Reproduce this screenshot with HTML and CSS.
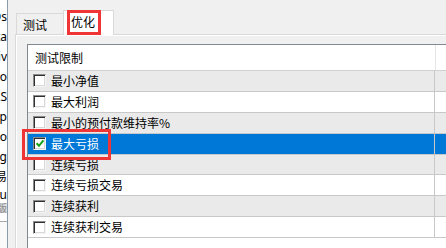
FILE: index.html
```html
<!DOCTYPE html>
<html>
<head>
<meta charset="utf-8">
<link rel="stylesheet" href="styles.css">
</head>
<body>
<div class="window">
  <div class="side">
    <div class="si">EDs</div>
    <div class="si">ta</div>
    <div class="si">riv</div>
    <div class="si">to</div>
    <div class="si">LS</div>
    <div class="si">ep</div>
    <div class="si">Auto</div>
    <div class="si">Sig</div>
    <div class="si">交易</div>
    <div class="si short">Tutu</div>
    <div class="si band">版</div>
    <div class="side-foot"></div>
  </div>
  <div class="main">
    <div class="tabs">
      <div class="tab">测试</div>
      <div class="tab active">优化</div>
    </div>
    <div class="page">
      <div class="list">
        <div class="header">
          <div class="hcol">测试限制</div>
          <div class="hrest"></div>
        </div>
        <div class="row alt"><div class="cell"><span class="cb"></span><span class="label">最小净值</span></div></div>
        <div class="row"><div class="cell"><span class="cb"></span><span class="label">最大利润</span></div></div>
        <div class="row alt"><div class="cell"><span class="cb"></span><span class="label">最小的预付款维持率%</span></div></div>
        <div class="row sel"><div class="cell"><span class="cb"><svg class="tick" viewBox="0 0 13 13" width="13" height="13"><polyline points="3.6,6.2 6,8.8 10.4,3.4" fill="none" stroke="#17a217" stroke-width="2"/></svg></span><span class="label">最大亏损</span></div></div>
        <div class="row alt"><div class="cell"><span class="cb"></span><span class="label">连续亏损</span></div></div>
        <div class="row"><div class="cell"><span class="cb"></span><span class="label">连续亏损交易</span></div></div>
        <div class="row alt"><div class="cell"><span class="cb"></span><span class="label">连续获利</span></div></div>
        <div class="row"><div class="cell"><span class="cb"></span><span class="label">连续获利交易</span></div></div>
      </div>
    </div>
  </div>
</div>
<div class="mark mark-tab"></div>
<div class="mark mark-row"></div>
</body>
</html>
```
FILE: styles.css
```css
html, body {
  margin: 0;
  padding: 0;
}
body {
  width: 446px;
  height: 248px;
  overflow: hidden;
  position: relative;
  background: #f0f0f0;
  font-family: "Noto Sans CJK SC", "Noto Sans", sans-serif;
  font-size: 12px;
  color: #000;
}
.window {
  display: flex;
  height: 248px;
}
.side {
  width: 8px;
  flex: none;
  box-sizing: border-box;
  background: #fff;
  border-right: 1px solid #8c9bab;
  overflow: hidden;
  padding-top: 7px;
  display: flex;
  flex-direction: column;
}
.si {
  height: 20px;
  line-height: 20px;
  white-space: nowrap;
  display: flex;
  justify-content: flex-end;
  font-family: "Noto Sans", "Noto Sans CJK SC", sans-serif;
  font-size: 12px;
  flex: none;
  overflow: hidden;
}
.si.short {
  height: 16px;
  line-height: 16px;
}
.si.band {
  height: 10px;
  line-height: 10px;
  background: #dedede;
  color: #8a8a8a;
  font-size: 10px;
}
.side-foot {
  margin-top: 8px;
  border-top: 1px solid #a8a8a8;
  flex: 1;
  background: #fafafa;
}
.main {
  flex: 1;
  padding-left: 7px;
  display: flex;
  flex-direction: column;
  min-width: 0;
}
.tabs {
  height: 34px;
  flex: none;
  box-sizing: border-box;
  display: flex;
  align-items: flex-end;
  padding-left: 1px;
}
.tab {
  width: 47px;
  height: 21px;
  box-sizing: border-box;
  border: 1px solid #d9d9d9;
  border-bottom: none;
  border-right: none;
  padding-left: 6px;
  line-height: 21px;
  color: #000;
}
.tab.active {
  width: 51px;
  height: 25px;
  border-right: 1px solid #d9d9d9;
  background: #fff;
  margin-bottom: -1px;
  position: relative;
  z-index: 1;
  padding-left: 7px;
  line-height: 21px;
}
.page {
  flex: 1;
  display: flex;
  flex-direction: column;
  border-top: 1px solid #d9d9d9;
  border-left: 1px solid #d9d9d9;
  background: #f0f0f0;
  box-shadow: inset 1px 1px #ffffff;
  padding: 9px 0 0 11px;
}
.list {
  flex: 1;
  background: #fff;
  border-top: 1px solid #828790;
  border-left: 1px solid #828790;
}
.header {
  display: flex;
  height: 26px;
  box-sizing: border-box;
  border-bottom: 1px solid #d0d0d0;
}
.hcol {
  width: 408px;
  box-sizing: border-box;
  border-right: 1px solid #e5e5e5;
  padding-left: 7px;
  line-height: 25px;
}
.row {
  display: flex;
  height: 20.9px;
  box-sizing: border-box;
  border-bottom: 1px solid #c8c8c8;
}
.row.alt {
  background: #eaeaea;
}
.row.sel {
  background: #0078d7;
  color: #fff;
}
.cell {
  width: 407px;
  box-sizing: border-box;
  border-right: 1px solid #c8c8c8;
  display: flex;
  align-items: center;
  padding-left: 5px;
}
.cb {
  width: 13px;
  height: 13px;
  flex: none;
  box-sizing: border-box;
  background: #fff;
  border: 1px solid;
  border-color: #8a8a8a #f4f4f4 #f4f4f4 #8a8a8a;
  box-shadow: inset 1px 1px #303030, inset -1px -1px #d8d8d8;
  margin-right: 5px;
}
.tick {
  display: block;
  margin: -1px 0 0 -1px;
}
.label {
  line-height: 20px;
  white-space: nowrap;
}
.mark {
  position: absolute;
  box-sizing: border-box;
  border: 3px solid #ef3535;
  z-index: 5;
}
.mark-tab {
  left: 67px;
  top: 10px;
  width: 34px;
  height: 25px;
}
.mark-row {
  left: 22px;
  top: 129px;
  width: 89px;
  height: 31px;
}
```
